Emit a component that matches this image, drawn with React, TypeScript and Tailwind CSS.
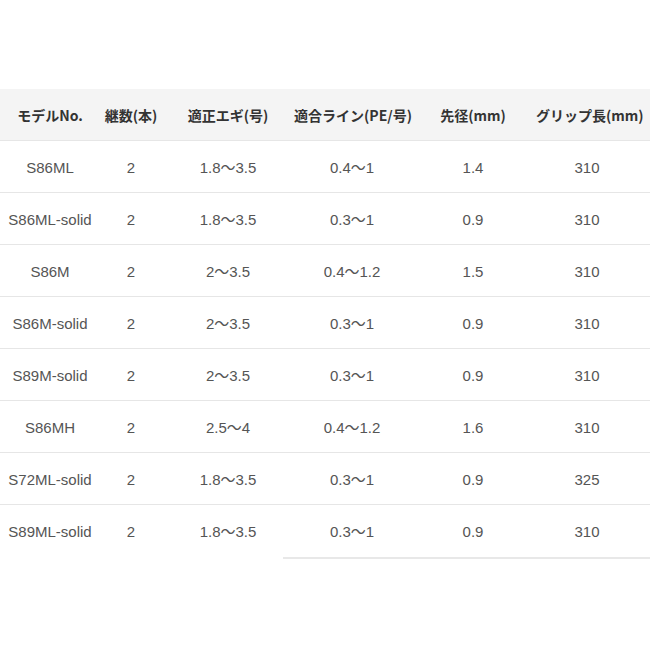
const headers = ['モデルNo.', '継数(本)', '適正エギ(号)', '適合ライン(PE/号)', '先径(mm)', 'グリップ長(mm)'];

const rows = [
  ['S86ML', '2', '1.8～3.5', '0.4～1', '1.4', '310'],
  ['S86ML-solid', '2', '1.8～3.5', '0.3～1', '0.9', '310'],
  ['S86M', '2', '2～3.5', '0.4～1.2', '1.5', '310'],
  ['S86M-solid', '2', '2～3.5', '0.3～1', '0.9', '310'],
  ['S89M-solid', '2', '2～3.5', '0.3～1', '0.9', '310'],
  ['S86MH', '2', '2.5～4', '0.4～1.2', '1.6', '310'],
  ['S72ML-solid', '2', '1.8～3.5', '0.3～1', '0.9', '325'],
  ['S89ML-solid', '2', '1.8～3.5', '0.3～1', '0.9', '310'],
];

const grid = 'grid grid-cols-[100px_62px_132px_116px_126px_102px] w-[650px]';

export default function App() {
  return (
    <div
      className="w-[652px] h-[652px] bg-white pt-[89px]"
      style={{ fontFamily: '"Liberation Sans", "Noto Sans CJK JP", sans-serif' }}
    >
      <div className={`${grid} h-[52px] pt-[2px] bg-[#f4f4f4] border-b border-[#e6e6e6] items-center`}>
        {headers.map((h) => (
          <div
            key={h}
            className="text-center text-[14px] font-bold text-[#333] whitespace-nowrap"
            style={{ fontFamily: '"Noto Sans CJK JP", "Noto Sans", sans-serif' }}
          >
            {h}
          </div>
        ))}
      </div>
      {rows.map((r, i) => (
        <div
          key={i}
          className={`${grid} h-[52px] pt-[3px] items-center ${i < rows.length - 1 ? 'border-b border-[#e6e6e6]' : ''}`}
        >
          {r.map((c, j) => (
            <div key={j} className="text-center text-[15px] text-[#555] whitespace-nowrap">
              {c}
            </div>
          ))}
        </div>
      ))}
      <div className="ml-[283px] w-[367px] h-[2px] bg-[#e8e8e8]" />
    </div>
  );
}
